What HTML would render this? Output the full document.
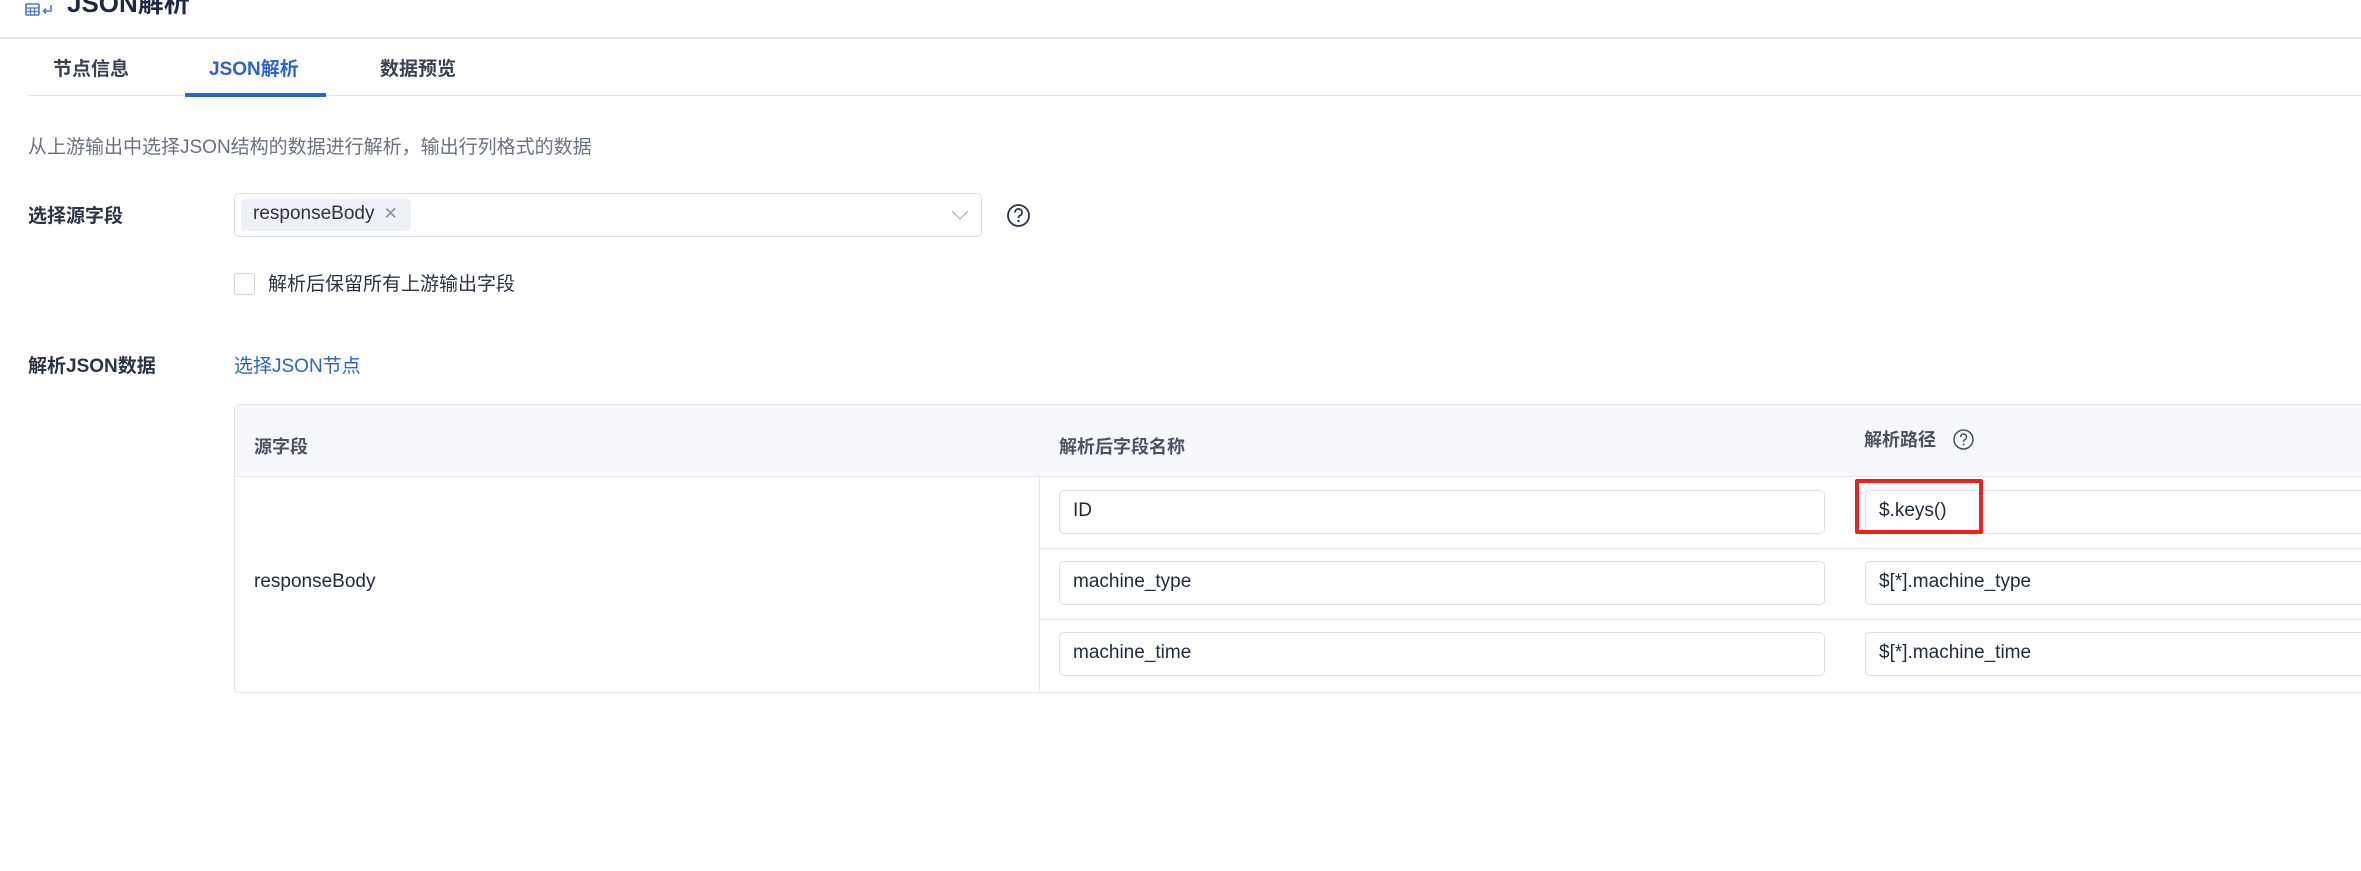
<!DOCTYPE html>
<html><head><meta charset="utf-8">
<style>
body{margin:0;width:2361px;height:871px;background:#fff;position:relative;overflow:hidden;font-family:"Liberation Sans","Noto Sans CJK SC",sans-serif;color:#1f2a40;}
.a{position:absolute;white-space:nowrap;}
.lbl{font-size:19px;font-weight:bold;color:#2c3548;}
.inp{position:absolute;height:42px;border:1px solid #dcdfe6;border-radius:5px;background:#fff;font-size:19px;line-height:40px;padding-left:13px;box-sizing:content-box;color:#1f2a40;}
</style></head><body>
<svg class="a" style="left:25px;top:3px" width="30" height="13" viewBox="0 0 30 13"><rect x="1" y="1" width="13" height="11" rx="1" fill="none" stroke="#4a78d6" stroke-width="1.6"/><path d="M1 5h13M1 8.5h13M5.5 5v7M9.5 5v7" stroke="#4a78d6" stroke-width="1.3"/><path d="M26 2v6h-7M21 5.5l-2.5 2.5 2.5 2.5" fill="none" stroke="#4a78d6" stroke-width="1.6"/></svg>
<div class="a" style="left:67px;top:-10px;font-size:26px;line-height:26px;font-weight:bold;color:#1e2a44">JSON解析</div>
<div class="a" style="left:0;top:37px;width:2361px;height:2px;background:#e4e6ec"></div>
<div class="a lbl" style="left:53px;top:54px;color:#3a4356">节点信息</div>
<div class="a lbl" style="left:209px;top:54px;color:#2a62d8">JSON解析</div>
<div class="a lbl" style="left:380px;top:54px;color:#3a4356">数据预览</div>
<div class="a" style="left:28px;top:95px;width:2333px;height:1px;background:#e4e6ec"></div>
<div class="a" style="left:185px;top:93px;width:141px;height:4px;background:#2a62d8"></div>
<div class="a" style="left:28px;top:132px;font-size:19px;color:#6b7280">从上游输出中选择JSON结构的数据进行解析，输出行列格式的数据</div>
<div class="a lbl" style="left:28px;top:201px">选择源字段</div>
<div class="a" style="left:234px;top:193px;width:746px;height:42px;border:1px solid #dcdfe6;border-radius:5px"></div>
<div class="a" style="left:241px;top:199px;width:170px;height:32px;background:#eef1f6;border-radius:4px;font-size:19px;line-height:30px;color:#2c3548"><span style="margin-left:12px">responseBody</span><span style="margin-left:9px;color:#8a909c;font-size:17px">✕</span></div>
<svg class="a" style="left:951px;top:209px" width="18" height="12"><path d="M1 2l8 8 8-8" fill="none" stroke="#b4b9c3" stroke-width="1.5"/></svg>
<svg class="a" style="left:1006px;top:203px" width="25" height="25"><circle cx="12.5" cy="12.5" r="10.5" fill="none" stroke="#2c3548" stroke-width="1.8"/><path d="M9 9.5a3.5 3.5 0 1 1 4.5 3.3c-1 .4-1 1-1 2.2" fill="none" stroke="#2c3548" stroke-width="1.8"/><circle cx="12.5" cy="18" r="1.2" fill="#2c3548"/></svg>
<div class="a" style="left:234px;top:273px;width:19px;height:20px;border:1px solid #cfd3da;border-radius:3px"></div>
<div class="a" style="left:268px;top:269px;font-size:19px;color:#2c3548">解析后保留所有上游输出字段</div>
<div class="a lbl" style="left:28px;top:351px">解析JSON数据</div>
<div class="a" style="left:234px;top:351px;font-size:19px;color:#2a62d8">选择JSON节点</div>
<div class="a" style="left:234px;top:404px;width:2140px;height:287px;border:1px solid #e4e6ec;border-radius:5px"></div>
<div class="a" style="left:235px;top:405px;width:2140px;height:71px;background:#f7f8fb;border-bottom:1px solid #e4e6ec"></div>
<div class="a lbl" style="left:254px;top:433px;font-size:18px;color:#4a5263">源字段</div>
<div class="a lbl" style="left:1059px;top:433px;font-size:18px;color:#4a5263">解析后字段名称</div>
<div class="a lbl" style="left:1864px;top:426px;font-size:18px;color:#4a5263">解析路径</div>
<svg class="a" style="left:1952px;top:428px" width="23" height="23"><circle cx="11.5" cy="11.5" r="9.5" fill="none" stroke="#4a5263" stroke-width="1.5"/><path d="M8.5 9a3 3 0 1 1 4 2.8c-.9.4-.9.9-.9 2" fill="none" stroke="#4a5263" stroke-width="1.5"/><circle cx="11.6" cy="16.5" r="1" fill="#4a5263"/></svg>
<div class="a" style="left:1039px;top:477px;width:1px;height:214px;background:#e4e6ec"></div>
<div class="a" style="left:1040px;top:548px;width:1330px;height:1px;background:#e4e6ec"></div>
<div class="a" style="left:1040px;top:619px;width:1330px;height:1px;background:#e4e6ec"></div>
<div class="a" style="left:254px;top:571px;font-size:19px">responseBody</div>
<div class="inp" style="left:1059px;top:490px;width:751px">ID</div>
<div class="inp" style="left:1059px;top:561px;width:751px">machine_type</div>
<div class="inp" style="left:1059px;top:632px;width:751px">machine_time</div>
<div class="inp" style="left:1865px;top:490px;width:600px">$.keys()</div>
<div class="inp" style="left:1865px;top:561px;width:600px">$[*].machine_type</div>
<div class="inp" style="left:1865px;top:632px;width:600px">$[*].machine_time</div>
<div class="a" style="left:1855px;top:479px;width:120px;height:47px;border:4px solid #f0201a;border-radius:2px"></div>
</body></html>
